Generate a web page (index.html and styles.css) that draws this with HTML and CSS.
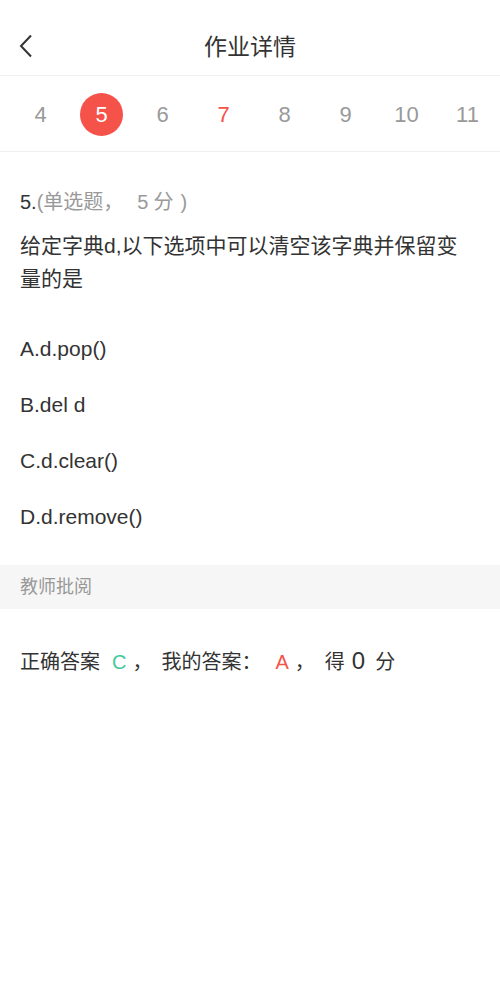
FILE: index.html
```html
<!DOCTYPE html>
<html>
<head>
<meta charset="utf-8">
<link rel="stylesheet" href="styles.css">
</head>
<body>
<div class="header">
  <svg class="back" width="14" height="24" viewBox="0 0 14 24"><path d="M12 1.5 L2 12 L12 22.5" fill="none" stroke="#333" stroke-width="2"/></svg>
  <div class="title">作业详情</div>
</div>
<div class="nums">
  <div class="num">4</div>
  <div class="num"><span class="cur">5</span></div>
  <div class="num">6</div>
  <div class="num red">7</div>
  <div class="num">8</div>
  <div class="num">9</div>
  <div class="num">10</div>
  <div class="num">11</div>
</div>
<div class="question">
  <div class="qhead"><span class="dark">5.</span>(单选题，<span class="sp5">5</span><span class="spf">分</span><span class="rp">)</span></div>
  <div class="qtext">给定字典d,以下选项中可以清空该字典并保留变量的是</div>
  <div class="options">
    <div class="opt">A.d.pop()</div>
    <div class="opt">B.del d</div>
    <div class="opt">C.d.clear()</div>
    <div class="opt">D.d.remove()</div>
  </div>
</div>
<div class="band">教师批阅</div>
<div class="answer">正确答案<span class="green">C</span><span class="c1">，</span><span class="m2">我的答案：</span><span class="red a">A</span><span class="c2">，</span><span class="de">得</span><span class="big">0</span><span class="fen">分</span></div>
</body>
</html>
```
FILE: styles.css
```css
body {
  margin: 0;
  background: #fff;
  font-family: "Liberation Sans", "Noto Sans CJK SC", sans-serif;
  color: #333;
}
.header {
  height: 76px;
  border-bottom: 1px solid #f0f0f0;
  display: flex;
  align-items: center;
  justify-content: center;
  position: relative;
  box-sizing: border-box;
  padding-top: 18px;
}
.back {
  position: absolute;
  left: 19px;
  top: 34px;
}
.title {
  font-size: 23px;
  color: #333;
  line-height: 30px;
}
.nums {
  height: 76px;
  display: flex;
  align-items: center;
  padding-left: 10px;
  padding-top: 2px;
  border-bottom: 1px solid #f0f0f0;
  box-sizing: border-box;
}
.num {
  width: 61px;
  text-align: center;
  font-size: 22px;
  color: #999;
  display: flex;
  justify-content: center;
  align-items: center;
}
.num.red { color: #f5524a; }
.cur {
  width: 43px;
  height: 43px;
  border-radius: 50%;
  background: #f5524a;
  color: #fff;
  display: flex;
  align-items: center;
  justify-content: center;
}
.question {
  padding: 32px 20px 20px;
}
.qhead {
  font-size: 20px;
  line-height: 36px;
  color: #999;
}
.sp5 { margin-left: 14px; }
.spf { margin-left: 5px; }
.rp { margin-left: 7px; }
.dark { color: #333; }
.qtext {
  margin-top: 9px;
  font-size: 21px;
  line-height: 33px;
  color: #333;
  padding-right: 16px;
}
.options {
  margin-top: 26px;
}
.opt {
  font-size: 21px;
  line-height: 56px;
  color: #333;
}
.band {
  background: #f6f6f6;
  height: 44px;
  line-height: 44px;
  padding-left: 20px;
  font-size: 18px;
  color: #999;
}
.answer {
  padding: 34px 20px 0;
  font-size: 20px;
  line-height: 36px;
  color: #333;
}
.green { color: #3ec999; margin-left: 12px; }
.red { color: #f5524a; }
.c1 { margin-left: 6px; }
.m2 { margin-left: 9px; }
.a { margin-left: 14px; }
.c2 { margin-left: 6px; }
.de { margin-left: 10px; }
.big { font-size: 24px; margin-left: 7px; }
.fen { margin-left: 10px; }
```
